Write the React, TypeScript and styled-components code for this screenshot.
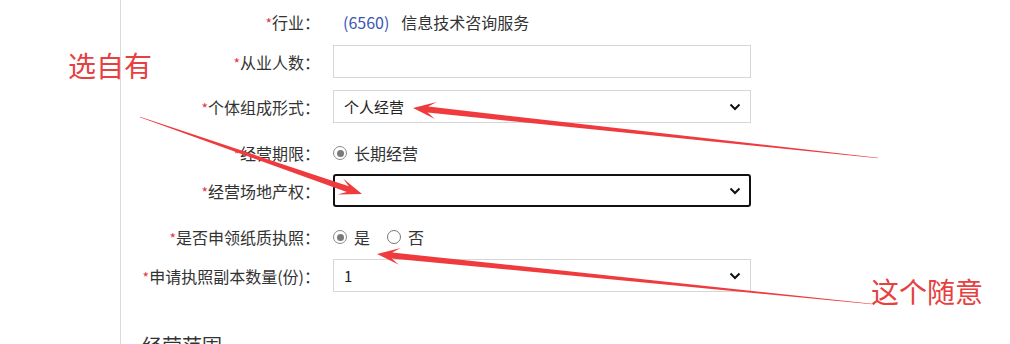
import React from "react";
import styled, { createGlobalStyle } from "styled-components";

const GlobalStyle = createGlobalStyle`
  html, body {
    margin: 0;
    padding: 0;
    background: #fff;
  }
  body {
    font-family: "Noto Sans CJK SC", "Liberation Sans", sans-serif;
    color: #333;
  }
`;

const Page = styled.div`
  position: relative;
  width: 1010px;
  height: 344px;
  overflow: hidden;
  padding-left: 120px;
  box-sizing: border-box;
`;

const Panel = styled.div`
  height: 100%;
  border-left: 1px solid #dadada;
  display: flex;
  flex-direction: column;
`;

const FormRow = styled.div<{ $h: number; $mt: number }>`
  flex-shrink: 0;
  display: grid;
  grid-template-columns: 199px 418px;
  column-gap: 13px;
  align-items: center;
  height: ${(p) => p.$h}px;
  margin-top: ${(p) => p.$mt}px;
`;

const Label = styled.label`
  text-align: right;
  font-size: 16px;
  color: #333;
  white-space: nowrap;
`;

const Star = styled.span`
  color: #e4393c;
  font-size: 14px;
`;

const Value = styled.div`
  font-size: 16px;
  color: #333;
  padding-left: 10px;
`;

const Code = styled.span`
  color: #3a55b4;
  margin-right: 12px;
`;

const TextInput = styled.div`
  height: 33px;
  box-sizing: border-box;
  border: 1px solid #d6d6d6;
  background: #fff;
`;

const SelectBox = styled.div<{ $focused?: boolean }>`
  height: 33px;
  box-sizing: border-box;
  display: flex;
  align-items: center;
  justify-content: space-between;
  font-size: 15px;
  color: #222;
  background: #fff;
  border: ${(p) => (p.$focused ? "2px solid #111" : "1px solid #d6d6d6")};
  border-radius: ${(p) => (p.$focused ? "3px" : "0")};
  padding-left: ${(p) => (p.$focused ? "9px" : "10px")};
  padding-right: ${(p) => (p.$focused ? "8px" : "9px")};
`;

const RadioGroup = styled.div`
  display: flex;
  align-items: center;
  font-size: 16px;
  color: #333;
`;

const RadioItem = styled.span`
  display: inline-flex;
  align-items: center;
  gap: 7px;
  margin-right: 17px;
`;

const RadioDot = styled.span<{ $checked?: boolean }>`
  width: 14px;
  height: 14px;
  box-sizing: border-box;
  border-radius: 50%;
  border: ${(p) => (p.$checked ? "1.5px solid #8a8a8a" : "1px solid #777")};
  background: #fff;
  display: inline-flex;
  align-items: center;
  justify-content: center;
  &::after {
    content: "";
    display: ${(p) => (p.$checked ? "block" : "none")};
    width: 7px;
    height: 7px;
    border-radius: 50%;
    background: #7a7a7a;
  }
`;

const SectionTitle = styled.div`
  flex-shrink: 0;
  font-size: 20px;
  line-height: 24px;
  color: #333;
  margin-top: 42px;
  margin-left: 21px;
`;

const Note = styled.div<{ $x: number; $y: number }>`
  position: absolute;
  left: ${(p) => p.$x}px;
  top: ${(p) => p.$y}px;
  font-size: 28px;
  line-height: 1;
  color: #e6403f;
  white-space: nowrap;
`;

const Overlay = styled.svg`
  position: absolute;
  left: 0;
  top: 0;
  pointer-events: none;
`;

const Chevron = () => (
  <svg width="12" height="8" viewBox="0 0 12 8">
    <path d="M1.5 1.5 L6 6 L10.5 1.5" fill="none" stroke="#111" strokeWidth="2" />
  </svg>
);

const Req = ({ children }: { children: React.ReactNode }) => (
  <Label>
    <Star>*</Star>
    {children}：
  </Label>
);

// tapered annotation arrow, thin tail → barbed head
const arrowPoints = (tx: number, ty: number, px: number, py: number) => {
  const dx = px - tx;
  const dy = py - ty;
  const len = Math.hypot(dx, dy);
  const ux = dx / len;
  const uy = dy / len;
  const nx = -uy;
  const ny = ux;
  const at = (back: number, side: number) =>
    `${(px - ux * back + nx * side).toFixed(1)},${(py - uy * back + ny * side).toFixed(1)}`;
  const tail = (side: number) =>
    `${(tx + nx * side).toFixed(1)},${(ty + ny * side).toFixed(1)}`;
  return [
    tail(0.3),
    at(15, 3),
    at(23, 8.5),
    at(0, 0),
    at(23, -8.5),
    at(15, -3),
    tail(-0.3)
  ].join(" ");
};

const arrows = [
  [878, 158, 413, 108],
  [140, 117, 362, 194],
  [872, 304, 377, 254]
];

export default function App() {
  return (
    <>
      <GlobalStyle />
      <Page>
        <Panel>
          <FormRow $h={44} $mt={0}>
            <Req>行业</Req>
            <Value>
              <Code>(6560)</Code>信息技术咨询服务
            </Value>
          </FormRow>
          <FormRow $h={33} $mt={1}>
            <Req>从业人数</Req>
            <TextInput />
          </FormRow>
          <FormRow $h={33} $mt={12}>
            <Req>个体组成形式</Req>
            <SelectBox>
              <span>个人经营</span>
              <Chevron />
            </SelectBox>
          </FormRow>
          <FormRow $h={34} $mt={13}>
            <Req>经营期限</Req>
            <RadioGroup>
              <RadioItem>
                <RadioDot $checked />
                长期经营
              </RadioItem>
            </RadioGroup>
          </FormRow>
          <FormRow $h={33} $mt={4}>
            <Req>经营场地产权</Req>
            <SelectBox $focused>
              <span />
              <Chevron />
            </SelectBox>
          </FormRow>
          <FormRow $h={34} $mt={13}>
            <Req>是否申领纸质执照</Req>
            <RadioGroup>
              <RadioItem>
                <RadioDot $checked />是
              </RadioItem>
              <RadioItem>
                <RadioDot />否
              </RadioItem>
            </RadioGroup>
          </FormRow>
          <FormRow $h={33} $mt={5}>
            <Req>申请执照副本数量(份)</Req>
            <SelectBox>
              <span>1</span>
              <Chevron />
            </SelectBox>
          </FormRow>
          <SectionTitle>经营范围</SectionTitle>
        </Panel>

        <Note $x={68} $y={51}>选自有</Note>
        <Note $x={871} $y={277}>这个随意</Note>

        <Overlay width="1010" height="344" viewBox="0 0 1010 344">
          {arrows.map(([tx, ty, px, py], i) => (
            <polygon key={i} points={arrowPoints(tx, ty, px, py)} fill="#ef3b3d" />
          ))}
        </Overlay>
      </Page>
    </>
  );
}
